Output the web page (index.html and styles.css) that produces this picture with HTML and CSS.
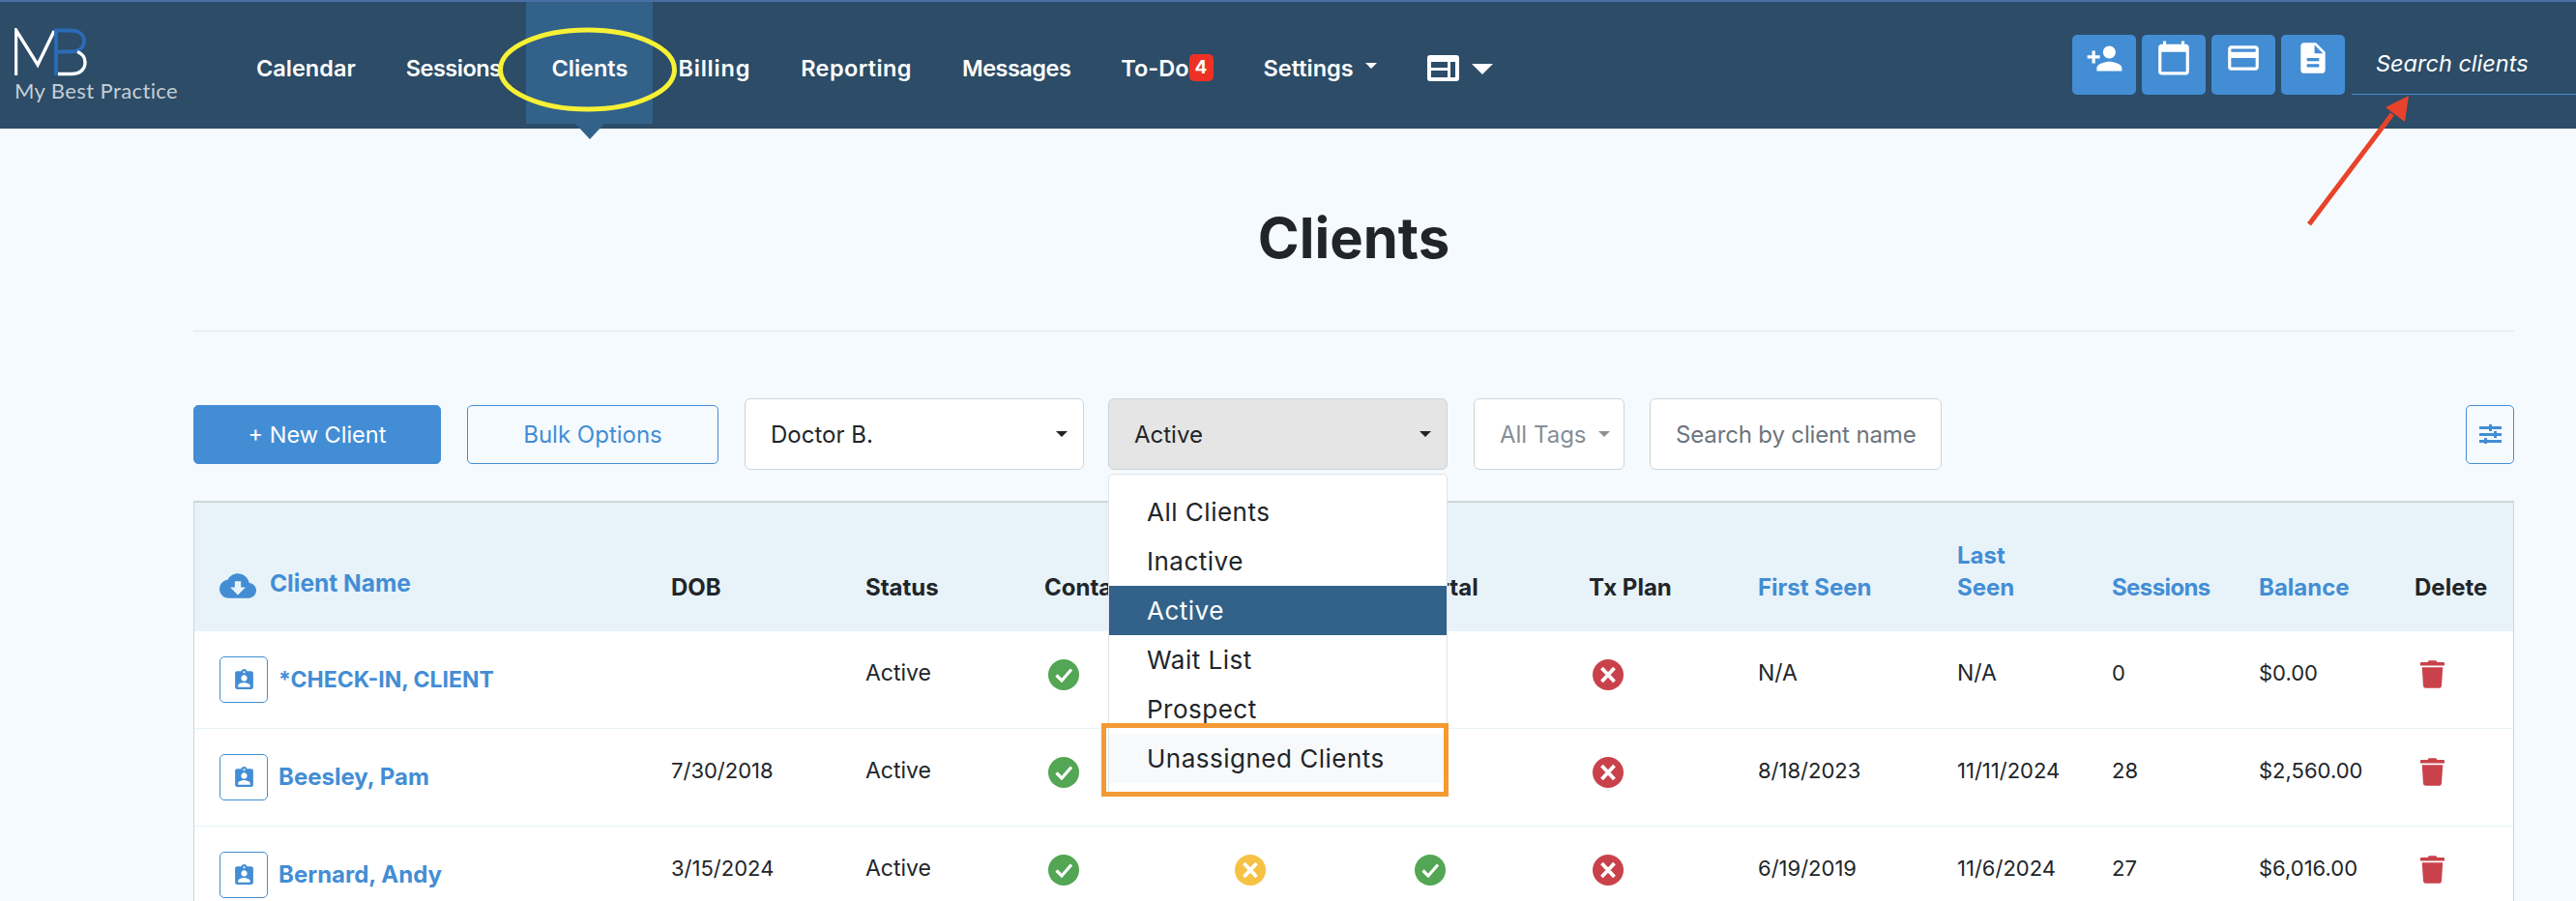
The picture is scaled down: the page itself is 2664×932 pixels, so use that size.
FILE: index.html
```html
<!DOCTYPE html>
<html lang="en">
<head>
<meta charset="utf-8">
<title>Clients</title>
<link rel="stylesheet" href="styles.css">
</head>
<body>
<svg class="sprite" aria-hidden="true">
  <symbol id="ok" viewBox="0 0 32 32"><circle cx="16" cy="16" r="16" fill="currentColor"/><path d="M8.5 16.5l5.5 5.5 10-11.5" fill="none" stroke="#fff" stroke-width="3.2"/></symbol>
  <symbol id="no" viewBox="0 0 32 32"><circle cx="16" cy="16" r="16" fill="currentColor"/><path d="M9.500 9l13 14M22.500 9l-13 14" fill="none" stroke="#fff" stroke-width="3.800"/></symbol>
  <symbol id="badge" viewBox="0 0 24 24"><path d="M19 3h-4.18C14.4 1.84 13.3 1 12 1c-1.3 0-2.4.84-2.82 2H5c-1.1 0-2 .9-2 2v14c0 1.1.9 2 2 2h14c1.1 0 2-.9 2-2V5c0-1.1-.9-2-2-2zm-7 0c.55 0 1 .45 1 1s-.45 1-1 1-1-.45-1-1 .45-1 1-1zm0 4c1.66 0 3 1.34 3 3s-1.34 3-3 3-3-1.34-3-3 1.34-3 3-3zm6 12H6v-1.400c0-2 4-3.100 6-3.100s6 1.100 6 3.100V19z" fill="currentColor"/></symbol>
  <symbol id="trash" viewBox="0 0 448 512"><path d="M432 32H312l-9.400-18.700A24 24 0 0 0 281.100 0H166.800a23.720 23.720 0 0 0-21.400 13.300L136 32H16A16 16 0 0 0 0 48v32a16 16 0 0 0 16 16h416a16 16 0 0 0 16-16V48a16 16 0 0 0-16-16zM53.200 467a48 48 0 0 0 47.900 45h245.800a48 48 0 0 0 47.900-45L416 128H32z" fill="currentColor"/></symbol>
</svg>

<header class="topbar">
  <a class="logo">
    <svg class="logo-mark" viewBox="0 0 76 50" width="76" height="50" aria-hidden="true">
      <path d="M1.500 49V2L24 38 41 3" fill="none" stroke="#fff" stroke-width="3.400"/>
      <path d="M43 49V2.500h14c9 0 15 4 15 11s-6 11-15 11H44" fill="none" stroke="#2b6cb8" stroke-width="3.800"/>
      <path d="M45 47.500h14c9 0 14-5 14-12 0-6-3-9-8-11" fill="none" stroke="#fff" stroke-width="3.400"/>
    </svg>
    <span class="logo-text">My Best Practice</span>
  </a>
  <nav class="nav">
    <a class="nav-link">Calendar</a>
    <a class="nav-link nav-tight">Sessions</a>
    <a class="nav-link is-current">Clients</a>
    <a class="nav-link nav-wider">Billing</a>
    <a class="nav-link nav-wide">Reporting</a>
    <a class="nav-link nav-tight">Messages</a>
    <a class="nav-link">To-Do<span class="count">4</span></a>
    <a class="nav-link">Settings<i class="caret caret-white"></i></a>
    <a class="nav-link nav-layout">
      <svg width="33" height="27" viewBox="0 0 33 27" aria-hidden="true"><path fill="#fff" fill-rule="evenodd" d="M3 0h27a3 3 0 0 1 3 3v21a3 3 0 0 1-3 3H3a3 3 0 0 1-3-3V3a3 3 0 0 1 3-3zM4 7v6h17V7zm0 9v7h17v-7zm20-9v16h5V7z"/></svg>
      <i class="caret caret-large"></i>
    </a>
  </nav>
  <div class="quick">
    <button class="quick-btn"><svg viewBox="0 0 24 24" width="39" height="39" aria-hidden="true"><path fill="#fff" d="M15 12c2.210 0 4-1.790 4-4s-1.790-4-4-4-4 1.790-4 4 1.790 4 4 4zm-9-2V7H4v3H1v2h3v3h2v-3h3v-2H6zm9 4c-2.670 0-8 1.340-8 4v2h16v-2c0-2.660-5.330-4-8-4z"/></svg></button>
    <button class="quick-btn"><svg viewBox="0 0 24 24" width="38" height="38" aria-hidden="true"><path fill="#fff" d="M20 3h-1V1h-2v2H7V1H5v2H4c-1.100 0-2 .9-2 2v16c0 1.100.9 2 2 2h16c1.100 0 2-.9 2-2V5c0-1.100-.9-2-2-2zm0 18H4V8h16v13z"/></svg></button>
    <button class="quick-btn"><svg viewBox="0 0 24 24" width="38" height="38" aria-hidden="true"><path fill="#fff" d="M20 4H4c-1.110 0-1.990.89-1.990 2L2 18c0 1.110.89 2 2 2h16c1.110 0 2-.89 2-2V6c0-1.110-.89-2-2-2zm0 14H4v-6h16v6zm0-10H4V6h16v2z"/></svg></button>
    <button class="quick-btn"><svg viewBox="0 0 24 24" width="38" height="38" aria-hidden="true"><path fill="#fff" d="M14 2H6c-1.100 0-1.990.9-1.990 2L4 20c0 1.100.89 2 1.990 2H18c1.100 0 2-.9 2-2V8l-6-6zm2 16H8v-2h8v2zm0-4H8v-2h8v2zm-3-5V3.500L18.500 9H13z"/></svg></button>
  </div>
  <div class="top-search">Search clients</div>
</header>

<main class="page">
  <h1 class="title">Clients</h1>
  <div class="toolbar">
    <button class="btn btn-primary">+ New Client</button>
    <button class="btn btn-outline">Bulk Options</button>
    <div class="field field-doctor">Doctor B.<i class="caret"></i></div>
    <div class="field field-status">Active<i class="caret"></i></div>
    <div class="field field-tags">All Tags<i class="caret caret-grey"></i></div>
    <div class="field field-search">Search by client name</div>
    <button class="btn btn-outline btn-icon"><svg viewBox="0 0 23 20" width="23" height="20" aria-hidden="true"><path fill="currentColor" d="M0 2h23v3H0zM0 9h23v3H0zM0 16h23v3H0zM10 0h3v7h-3zM15 7h3v7h-3zM5 14h3v6H5z"/></svg></button>
  </div>

  <table class="clients">
    <colgroup>
      <col class="c1"><col class="c2"><col class="c3"><col class="c4"><col class="c5"><col class="c6">
      <col class="c7"><col class="c8"><col class="c9"><col class="c10"><col class="c11"><col class="c12">
    </colgroup>
    <thead>
      <tr>
        <th class="th-name"><span class="name-head"><svg viewBox="0 0 24 24" width="38" height="38" aria-hidden="true"><path fill="currentColor" d="M19.350 10.040C18.670 6.590 15.640 4 12 4 9.110 4 6.600 5.640 5.350 8.040 2.340 8.360 0 10.910 0 14c0 3.310 2.690 6 6 6h13c2.760 0 5-2.240 5-5 0-2.640-2.050-4.780-4.650-4.960zM17 13l-5 5-5-5h3V9h4v4h3z"/></svg><span class="name-label">Client Name</span></span></th>
        <th>DOB</th>
        <th>Status</th>
        <th>Contact</th>
        <th>Intake</th>
        <th>Portal</th>
        <th>Tx Plan</th>
        <th class="sort">First Seen</th>
        <th class="sort">Last<br>Seen</th>
        <th class="sort th-tight">Sessions</th>
        <th class="sort">Balance</th>
        <th>Delete</th>
      </tr>
    </thead>
    <tbody>
      <tr>
        <td class="td-name"><span class="name-cell name-caps"><span class="chip"><svg width="25" height="25"><use href="#badge"/></svg></span>*CHECK-IN, CLIENT</span></td>
        <td></td>
        <td>Active</td>
        <td><svg class="mark green" width="32" height="32"><use href="#ok"/></svg></td>
        <td><svg class="mark yellow" width="32" height="32"><use href="#no"/></svg></td>
        <td><svg class="mark green" width="32" height="32"><use href="#ok"/></svg></td>
        <td><svg class="mark red" width="32" height="32"><use href="#no"/></svg></td>
        <td>N/A</td>
        <td>N/A</td>
        <td class="num">0</td>
        <td class="num">$0.00</td>
        <td><svg class="bin" width="25" height="29"><use href="#trash"/></svg></td>
      </tr>
      <tr>
        <td class="td-name"><span class="name-cell"><span class="chip"><svg width="25" height="25"><use href="#badge"/></svg></span>Beesley, Pam</span></td>
        <td class="num">7/30/2018</td>
        <td>Active</td>
        <td><svg class="mark green" width="32" height="32"><use href="#ok"/></svg></td>
        <td><svg class="mark yellow" width="32" height="32"><use href="#no"/></svg></td>
        <td><svg class="mark green" width="32" height="32"><use href="#ok"/></svg></td>
        <td><svg class="mark red" width="32" height="32"><use href="#no"/></svg></td>
        <td class="num">8/18/2023</td>
        <td class="num">11/11/2024</td>
        <td class="num">28</td>
        <td class="num">$2,560.00</td>
        <td><svg class="bin" width="25" height="29"><use href="#trash"/></svg></td>
      </tr>
      <tr>
        <td class="td-name"><span class="name-cell"><span class="chip"><svg width="25" height="25"><use href="#badge"/></svg></span>Bernard, Andy</span></td>
        <td class="num">3/15/2024</td>
        <td>Active</td>
        <td><svg class="mark green" width="32" height="32"><use href="#ok"/></svg></td>
        <td><svg class="mark yellow" width="32" height="32"><use href="#no"/></svg></td>
        <td><svg class="mark green" width="32" height="32"><use href="#ok"/></svg></td>
        <td><svg class="mark red" width="32" height="32"><use href="#no"/></svg></td>
        <td class="num">6/19/2019</td>
        <td class="num">11/6/2024</td>
        <td class="num">27</td>
        <td class="num">$6,016.00</td>
        <td><svg class="bin" width="25" height="29"><use href="#trash"/></svg></td>
      </tr>
    </tbody>
  </table>
</main>

<ul class="status-menu">
  <li>All Clients</li>
  <li>Inactive</li>
  <li class="is-selected">Active</li>
  <li>Wait List</li>
  <li>Prospect</li>
  <li class="is-hover">Unassigned Clients</li>
</ul>

<div class="callout-box"></div>
<svg class="callouts" width="2664" height="932" viewBox="0 0 2664 932" aria-hidden="true">
  <ellipse cx="607.500" cy="72" rx="90" ry="41" fill="none" stroke="#f7f135" stroke-width="5"/>
  <path d="M2388 232L2474 118" stroke="#e8432a" stroke-width="5" fill="none"/>
  <path d="M2491 99L2487 126 2467 111z" fill="#e8432a"/>
</svg>
</body>
</html>
```

FILE: styles.css
```css
* { box-sizing: border-box; }

html, body {
  margin: 0;
  height: 932px;
  overflow: hidden;
}

body {
  position: relative;
  background: #f5fafe;
  color: #212529;
  font-family: Inter, "Liberation Sans", sans-serif;
  font-size: 23px;
}

.sprite { display: none; }

/* top bar */
.topbar {
  display: flex;
  align-items: flex-start;
  height: 133px;
  background: #2c4c67;
  border-top: 2px solid #4a6fa5;
}

.logo {
  display: flex;
  flex-direction: column;
  width: 239px;
  flex: none;
  padding: 27px 0 0 15px;
}

.logo-mark { display: block; }

.logo-text {
  margin-top: 3px;
  color: #c6ced6;
  font-family: Lato, sans-serif;
  font-size: 22px;
  line-height: 24px;
  letter-spacing: 0.4px;
  white-space: nowrap;
}

.nav { display: flex; }

.nav-link {
  position: relative;
  display: flex;
  align-items: center;
  height: 126px;
  padding: 10px 26px 0;
  color: #fff;
  font-size: 23.5px;
  font-weight: 600;
  white-space: nowrap;
}

.nav-tight { letter-spacing: -0.5px; }
.nav-wide { letter-spacing: 0.4px; }
.nav-wider { letter-spacing: 0.8px; }

.nav-link.is-current { background: #32628a; }

.nav-link.is-current::after {
  content: "";
  position: absolute;
  left: 50%;
  top: 126px;
  margin-left: -15px;
  border: 15px solid transparent;
  border-top: 16px solid #32628a;
  border-bottom: 0;
}

.count {
  width: 25px;
  height: 28px;
  background: #ee3124;
  border-radius: 5px;
  color: #fff;
  font-size: 19px;
  font-weight: 700;
  line-height: 28px;
  text-align: center;
}

.caret {
  display: inline-block;
  margin-left: 12px;
  border: 6px solid transparent;
  border-top: 6px solid #212529;
  border-bottom: 0;
}

.caret-white { border-top-color: #fff; margin-bottom: 4px; }
.caret-grey { border-top-color: #8b9298; }

.caret-large {
  margin-left: 13px;
  border-width: 11px;
  border-bottom-width: 0;
  border-top-color: #fff;
  margin-top: 3px;
}

.quick {
  display: flex;
  gap: 6px;
  margin: 34px 7px 0 auto;
}

.quick-btn {
  display: flex;
  justify-content: center;
  width: 66px;
  height: 62px;
  padding: 5px 0 0;
  background: #438dd5;
  border: 0;
  border-radius: 5px;
}

.top-search {
  width: 232px;
  height: 62px;
  margin-top: 34px;
  padding: 15px 0 0 25px;
  border-bottom: 1px solid #438dd5;
  color: #fff;
  font-size: 23.5px;
  font-style: italic;
  line-height: 30px;
  white-space: nowrap;
}

/* page */
.page { padding: 0 64px 0 200px; }

.title {
  height: 210px;
  margin: 0;
  padding-top: 84px;
  border-bottom: 1px solid #e3e9ee;
  color: #212529;
  font-size: 58px;
  font-weight: 700;
  line-height: 58px;
  text-align: center;
}

.toolbar {
  display: flex;
  align-items: center;
  height: 74px;
  margin-top: 69px;
}

.btn {
  height: 61px;
  border-radius: 5px;
  font: inherit;
}

.btn-primary {
  width: 256px;
  background: #438dd5;
  border: 1px solid #438dd5;
  color: #fff;
  font-size: 23.500px;
}

.btn-outline {
  width: 260px;
  margin-left: 27px;
  background: transparent;
  border: 1px solid #438dd5;
  color: #438dd5;
  font-size: 24px;
}

.btn-icon {
  display: flex;
  align-items: center;
  justify-content: center;
  width: 50px;
  margin-left: auto;
  padding: 0;
}

.field {
  display: flex;
  align-items: center;
  justify-content: space-between;
  height: 74px;
  padding: 0 16px 0 26px;
  background: #fff;
  border: 1px solid #ced4da;
  border-radius: 6px;
  font-size: 24px;
  white-space: nowrap;
}

.field-doctor { width: 351px; margin-left: 27px; }
.field-status { width: 351px; margin-left: 25px; background: #e5e5e5; }
.field-tags { width: 156px; margin-left: 27px; color: #868e96; }
.field-search { width: 302px; margin-left: 26px; color: #6c757d; letter-spacing: -0.15px; }

/* table */
.clients {
  width: 2400px;
  margin-top: 32px;
  border-collapse: separate;
  border-spacing: 0;
  border-top: 2px solid #ccd5da;
  border-left: 1px solid #ccd5da;
  border-right: 1px solid #ccd5da;
  table-layout: fixed;
  background: #fff;
}

.c1 { width: 467px; }
.c2 { width: 201px; }
.c3 { width: 185px; }
.c4 { width: 193px; }
.c5 { width: 186px; }
.c6 { width: 184px; }
.c7 { width: 175px; }
.c8 { width: 206px; }
.c9 { width: 160px; }
.c10 { width: 152px; }
.c11 { width: 161px; }
.c12 { width: 128px; }

th {
  height: 133px;
  padding: 0 0 29px 26px;
  background: #e8f3f9;
  font-size: 24px;
  font-weight: 700;
  line-height: 33px;
  text-align: left;
  vertical-align: bottom;
  white-space: nowrap;
}

.sort, .name-head { color: #438dd5; }

.th-tight { letter-spacing: -0.6px; }

.th-name { padding-bottom: 28px; }

.name-head {
  display: flex;
  align-items: center;
  gap: 14px;
}

.name-label {
  margin-top: -6px;
  font-size: 24.5px;
}

td {
  height: 101px;
  padding: 30px 0 0 26px;
  border-bottom: 1px solid #e8f3f9;
  line-height: 26px;
  vertical-align: top;
  white-space: nowrap;
}

td.num { font-size: 22px; }

.td-name { padding-top: 26px; }

.name-cell {
  display: flex;
  align-items: center;
  gap: 11px;
  color: #438dd5;
  font-size: 24px;
  font-weight: 700;
}

.name-caps { font-size: 23px; }

.chip {
  display: flex;
  align-items: center;
  justify-content: center;
  width: 50px;
  height: 48px;
  background: #fff;
  border: 1px solid #438dd5;
  border-radius: 5px;
}

.mark { display: block; margin: -1px 0 0 4px; }
.green { color: #53a653; }
.yellow { color: #f6c244; }
.red { color: #c9424b; }

.bin { display: block; margin-left: 6px; color: #c9424b; }

/* open dropdown */
.status-menu {
  position: absolute;
  left: 1146px;
  top: 490px;
  width: 351px;
  height: 334px;
  margin: 0;
  padding: 13px 0 0;
  background: #fff;
  border: 1px solid #dfe4e8;
  border-radius: 5px 5px 0 0;
  font-size: 26px;
  letter-spacing: 0.5px;
  list-style: none;
}

.status-menu li {
  height: 51px;
  padding: 0 0 0 39px;
  line-height: 52px;
  white-space: nowrap;
}

.status-menu .is-selected { background: #32628a; color: #fff; }
.status-menu .is-hover { background: #f8f9fa; }

.callout-box {
  position: absolute;
  left: 1139px;
  top: 748px;
  width: 359px;
  height: 76px;
  border: 5px solid #f39a33;
}

.callouts {
  position: absolute;
  left: 0;
  top: 0;
  pointer-events: none;
}
```
